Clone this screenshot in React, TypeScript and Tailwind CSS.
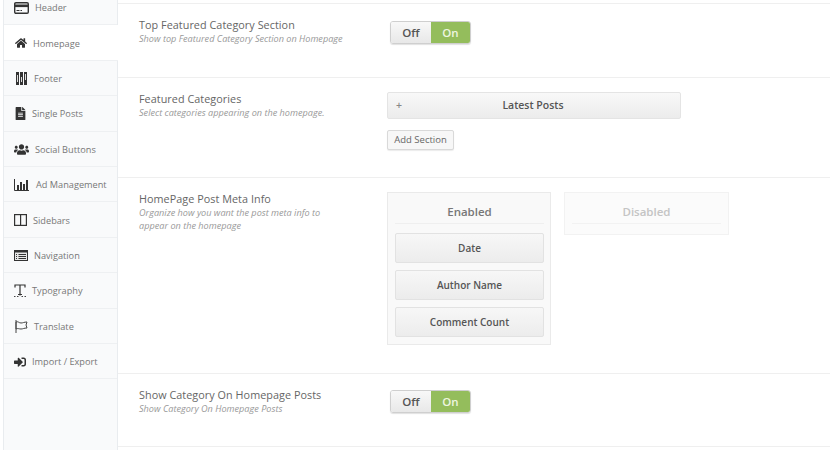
import type { ReactNode } from "react";
import { FaFileAlt, FaHome, FaSignInAlt, FaUsers } from "react-icons/fa";

const font = "font-['Open_Sans','Noto_Sans',sans-serif]";

function CardIcon() {
  return (
    <svg width="15" height="12" viewBox="0 0 15 12">
      <rect x="0.7" y="0.7" width="13.6" height="10.6" rx="1.2" fill="none" stroke="#333" strokeWidth="1.4" />
      <rect x="1" y="2.5" width="13" height="2.6" fill="#333" />
      <rect x="2.5" y="8" width="3" height="1" fill="#333" />
      <rect x="6.5" y="8" width="1.5" height="1" fill="#333" />
    </svg>
  );
}

function FooterIcon() {
  return (
    <svg width="11" height="13" viewBox="0 0 11 13">
      <rect x="0" y="0" width="3" height="13" fill="#333" />
      <rect x="4" y="0" width="3" height="13" fill="#333" />
      <rect x="8" y="0" width="3" height="13" fill="#333" />
      <rect x="1" y="3" width="1" height="7" fill="#ddd" />
      <rect x="5" y="5" width="1" height="5" fill="#ddd" />
      <rect x="9" y="2" width="1" height="6" fill="#ddd" />
    </svg>
  );
}

function ChartIcon() {
  return (
    <svg width="15" height="12" viewBox="0 0 15 12">
      <path d="M0.5 0v11.5H15" fill="none" stroke="#333" />
      <rect x="3" y="6" width="2" height="5" fill="#333" />
      <rect x="6" y="3" width="2" height="8" fill="#333" />
      <rect x="9" y="5" width="2" height="6" fill="#333" />
      <rect x="12" y="1" width="2" height="10" fill="#333" />
    </svg>
  );
}

function ColumnsIcon() {
  return (
    <svg width="13" height="12" viewBox="0 0 13 12">
      <rect x="0.6" y="0.6" width="11.8" height="10.8" fill="none" stroke="#333" strokeWidth="1.2" />
      <rect x="6" y="1" width="1.2" height="10" fill="#333" />
    </svg>
  );
}

function NavIcon() {
  return (
    <svg width="14" height="11" viewBox="0 0 14 11">
      <rect x="0.5" y="0.5" width="13" height="10" fill="#e8e8e8" stroke="#333" />
      <rect x="0" y="0" width="14" height="2.5" fill="#333" />
      <path d="M2 4.5h1M4.5 4.5H12M2 6.5h1M4.5 6.5H12M2 8.5h1M4.5 8.5H12" stroke="#333" />
    </svg>
  );
}

function TypeIcon() {
  return (
    <svg width="12" height="13" viewBox="0 0 12 13">
      <path d="M1 3.5V1h10v2.5M6 1v10.5" fill="none" stroke="#333" strokeWidth="1.2" />
      <path d="M4 10.5h4M0 12.6h1.5M3 12.6h1.5M7.5 12.6H9M10.5 12.6H12" stroke="#333" />
    </svg>
  );
}

function FlagIcon() {
  return (
    <svg width="13" height="13" viewBox="0 0 13 13">
      <path d="M1 0v13" stroke="#444" />
      <path d="M1 2c2 -1 3 1 5 1s3-1 6-1l-1 3 1 3c-3 0-4 1-6 1s-3-1-5 0z" fill="none" stroke="#444" />
    </svg>
  );
}

const MENU: { label: string; icon: ReactNode; gap: string; nudge?: string; active?: boolean }[] = [
  { label: "Header", icon: <CardIcon />, gap: "gap-[5px]" },
  { label: "Homepage", icon: <FaHome size={12} color="#333" />, gap: "gap-[3px]", nudge: "pl-px", active: true },
  { label: "Footer", icon: <FooterIcon />, gap: "gap-[4px]", nudge: "pl-[2px]" },
  { label: "Single Posts", icon: <FaFileAlt size={13} color="#333" />, gap: "gap-[2px]" },
  { label: "Social Buttons", icon: <FaUsers size={15} color="#333" />, gap: "gap-[5px]" },
  { label: "Ad Management", icon: <ChartIcon />, gap: "gap-[6px]" },
  { label: "Sidebars", icon: <ColumnsIcon />, gap: "gap-[3px]" },
  { label: "Navigation", icon: <NavIcon />, gap: "gap-[4px]" },
  { label: "Typography", icon: <TypeIcon />, gap: "gap-[2px]" },
  { label: "Translate", icon: <FlagIcon />, gap: "gap-[4px]", nudge: "pl-px" },
  { label: "Import / Export", icon: <FaSignInAlt size={12} color="#333" />, gap: "gap-[2px]" },
];

function Toggle({ top }: { top: string }) {
  return (
    <div className={`ml-[3px] flex h-[23px] w-[81px] overflow-hidden rounded-[3px] border border-[#cfcfcf] text-[11.5px] font-semibold shadow-[0_1px_1px_rgba(0,0,0,0.12)] ${top}`}>
      <div className="flex w-[40px] items-center justify-center bg-gradient-to-b from-[#f8f8f8] to-[#e8e8e8] text-[#555]">Off</div>
      <div className="flex flex-1 items-center justify-center bg-[#94bd5c] text-[#eef6e0]">On</div>
    </div>
  );
}

function Row({
  title,
  desc,
  height,
  children,
}: {
  title: string;
  desc: ReactNode;
  height: string;
  children: ReactNode;
}) {
  return (
    <div className={`flex border-b border-[#efefef] pl-[21px] ${height}`}>
      <div className="w-[248px] shrink-0 pt-[13px]">
        <div className="text-[10.8px] leading-[15px] tracking-[0.05px] text-[#666]">{title}</div>
        <div className="text-[9.15px] italic leading-[13px] text-[#999]">{desc}</div>
      </div>
      <div className="pt-[14px]">{children}</div>
    </div>
  );
}

function MetaItem({ label }: { label: string }) {
  return (
    <div className="flex h-[30px] items-center justify-center rounded-[2px] border border-[#e2e2e2] bg-gradient-to-b from-[#f7f7f7] to-[#ececec] text-[10px] font-semibold text-[#555]">
      {label}
    </div>
  );
}

export default function App() {
  return (
    <div className={`flex h-[450px] w-[830px] overflow-hidden bg-white ${font}`}>
      <div className="ml-[3px] w-[115px] shrink-0 border-x border-[#e9ecef] bg-[#f9fafb]">
        <div className="-mt-[10px]">
          {MENU.map((m) => (
            <div
              key={m.label}
              className={`flex h-[35.4px] items-center border-b border-[#eef0f2] pl-[10px] pt-[1px] text-[9.2px] text-[#777] ${m.gap} ${
                m.active ? "-mr-px bg-white" : ""
              }`}
            >
              <span className={`flex w-[16px] shrink-0 justify-start ${m.nudge ?? ""}`}>{m.icon}</span>
              <span className="mt-px">{m.label}</span>
            </div>
          ))}
        </div>
      </div>

      <div className="min-w-0 flex-1 pt-[3px]">
        <div className="border-t border-[#efefef]">
          <Row
            title="Top Featured Category Section"
            desc="Show top Featured Category Section on Homepage"
            height="h-[74px]"
          >
            <Toggle top="mt-[3px]" />
          </Row>
          <Row
            title="Featured Categories"
            desc="Select categories appearing on the homepage."
            height="h-[100px]"
          >
            <div className="flex h-[27px] w-[294px] items-center rounded-[2px] border border-[#e4e4e4] bg-gradient-to-b from-[#f8f8f8] to-[#ececec] text-[10.5px] font-semibold text-[#555]">
              <span className="w-[24px] pl-[8px] text-[#888]">+</span>
              <span className="flex-1 pr-[26px] pt-px text-center">Latest Posts</span>
            </div>
            <div className="mt-[11px] flex h-[20px] w-[67px] items-center justify-center rounded-[2px] border border-[#d9d9d9] bg-[#f7f7f7] text-[9.5px] text-[#666] shadow-[0_1px_1px_rgba(0,0,0,0.08)]">
              Add Section
            </div>
          </Row>
          <Row
            title="HomePage Post Meta Info"
            desc={
              <>
                Organize how you want the post meta info to
                <br />
                appear on the homepage
              </>
            }
            height="h-[196px]"
          >
            <div className="flex items-start gap-[13px]">
              <div className="w-[164px] border border-[#eaeaea] bg-[#f9f9f9] pb-[7px] pl-[7px] pr-[6px]">
                <div className="flex h-[31px] items-center justify-center border-b border-[#efefef] pt-[7px] text-[11.5px] font-semibold text-[#777]">
                  Enabled
                </div>
                <div className="mt-[9px] flex flex-col gap-[7px]">
                  <MetaItem label="Date" />
                  <MetaItem label="Author Name" />
                  <MetaItem label="Comment Count" />
                </div>
              </div>
              <div className="w-[165px] border border-[#f2f2f2] bg-[#fbfbfb] px-[7px] pb-[10px]">
                <div className="flex h-[31px] items-center justify-center border-b border-[#f2f2f2] pt-[7px] text-[11.5px] font-semibold text-[#c4c4c4]">
                  Disabled
                </div>
              </div>
            </div>
          </Row>
          <Row
            title="Show Category On Homepage Posts"
            desc="Show Category On Homepage Posts"
            height="h-[73px]"
          >
            <Toggle top="mt-[2px]" />
          </Row>
        </div>
      </div>
    </div>
  );
}
